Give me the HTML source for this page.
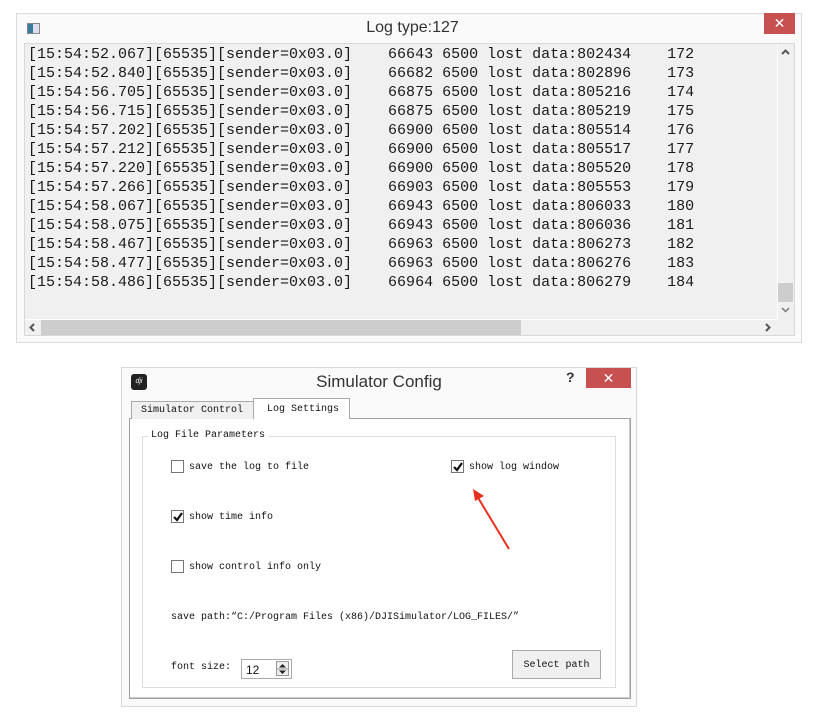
<!DOCTYPE html>
<html><head><meta charset="utf-8">
<style>
*{margin:0;padding:0;box-sizing:border-box}
body{width:825px;height:725px;background:#fff;position:relative;overflow:hidden;font-family:"Liberation Sans",sans-serif}
.a{position:absolute}
.log{font-family:"Liberation Mono",monospace;font-size:15px;color:#1a1a1a;white-space:pre;line-height:19px}
.d{font-family:"Liberation Mono",monospace;font-size:10px;color:#111;white-space:pre}
.cb{position:absolute;width:13px;height:13px;border:1px solid #777;background:#fff}
</style></head><body>

<div class="a" style="left:16px;top:13px;width:786px;height:330px;background:#fafafa;border:1px solid #dcdcdc"></div>
<div class="a" style="left:27px;top:23px;width:13px;height:11px;border:1px solid #888;background:linear-gradient(90deg,#3a7a9a 0 45%,#dde 45%)"></div>
<div class="a" style="left:0;width:825px;top:19px;text-align:center;font-size:16px;color:#333">Log type:127</div>
<div class="a" style="left:764px;top:13px;width:31px;height:21px;background:#c75050;color:#fff;text-align:center;font-size:14px;line-height:21px">✕</div>
<div class="a" style="left:24px;top:43px;width:771px;height:293px;background:#f0f0f0;border:1px solid #d8d8d8"></div>
<div class="a log" style="left:28px;top:45px">[15:54:52.067][65535][sender=0x03.0]    66643 6500 lost data:802434    172
[15:54:52.840][65535][sender=0x03.0]    66682 6500 lost data:802896    173
[15:54:56.705][65535][sender=0x03.0]    66875 6500 lost data:805216    174
[15:54:56.715][65535][sender=0x03.0]    66875 6500 lost data:805219    175
[15:54:57.202][65535][sender=0x03.0]    66900 6500 lost data:805514    176
[15:54:57.212][65535][sender=0x03.0]    66900 6500 lost data:805517    177
[15:54:57.220][65535][sender=0x03.0]    66900 6500 lost data:805520    178
[15:54:57.266][65535][sender=0x03.0]    66903 6500 lost data:805553    179
[15:54:58.067][65535][sender=0x03.0]    66943 6500 lost data:806033    180
[15:54:58.075][65535][sender=0x03.0]    66943 6500 lost data:806036    181
[15:54:58.467][65535][sender=0x03.0]    66963 6500 lost data:806273    182
[15:54:58.477][65535][sender=0x03.0]    66963 6500 lost data:806276    183
[15:54:58.486][65535][sender=0x03.0]    66964 6500 lost data:806279    184</div>
<div class="a" style="left:777px;top:44px;width:17px;height:275px;background:#f0f0f0;border-left:1px solid #fff"></div>
<div class="a" style="left:778px;top:283px;width:15px;height:19px;background:#cdcdcd"></div>
<svg class="a" style="left:780px;top:47px" width="11" height="10"><path d="M2 7L5.5 3.5L9 7" stroke="#555" stroke-width="2" fill="none"/></svg>
<svg class="a" style="left:780px;top:305px" width="11" height="10"><path d="M2 3L5.5 6.5L9 3" stroke="#777" stroke-width="1.5" fill="none"/></svg>
<div class="a" style="left:25px;top:319px;width:752px;height:16px;background:#f0f0f0;border-top:1px solid #fff"></div>
<div class="a" style="left:41px;top:320px;width:480px;height:15px;background:#cdcdcd"></div>
<svg class="a" style="left:27px;top:322px" width="10" height="11"><path d="M7 2L3.5 5.5L7 9" stroke="#555" stroke-width="2" fill="none"/></svg>
<svg class="a" style="left:763px;top:322px" width="10" height="11"><path d="M3 2L6.5 5.5L3 9" stroke="#555" stroke-width="2" fill="none"/></svg>

<div class="a" style="left:121px;top:367px;width:516px;height:340px;background:#fafafa;border:1px solid #d8d8d8"></div>
<div class="a" style="left:131px;top:374px;width:16px;height:16px;background:#222;border-radius:3px;color:#fff;font-size:7px;text-align:center;line-height:16px;font-style:italic">dji</div>
<div class="a" style="left:121px;width:516px;top:372px;text-align:center;font-size:17px;color:#333">Simulator Config</div>
<div class="a" style="left:566px;top:369px;font-size:14px;font-weight:bold;color:#333">?</div>
<div class="a" style="left:586px;top:368px;width:45px;height:20px;background:#c75050;color:#fff;text-align:center;font-size:14px;line-height:20px">✕</div>
<div class="a" style="left:129px;top:418px;width:502px;height:281px;background:#fff;border:1px solid #a0a0a0;box-shadow:inset -1px -1px 0 #ccc"></div>
<div class="a d" style="left:131px;top:401px;width:123px;height:18px;background:#f0f0f0;border:1px solid #aaa;border-bottom:none;padding:3px 0 0 9px">Simulator Control</div>
<div class="a d" style="left:253px;top:398px;width:97px;height:21px;background:#fff;border:1px solid #aaa;border-bottom:none;padding:5px 0 0 13px">Log Settings</div>
<div class="a" style="left:142px;top:436px;width:474px;height:252px;border:1px solid #ddd"></div>
<div class="a d" style="left:148px;top:430px;background:#fff;padding:0 3px">Log File Parameters</div>

<div class="cb" style="left:171px;top:460px"></div>
<div class="a d" style="left:189px;top:462px">save the log to file</div>
<div class="cb" style="left:451px;top:460px"></div>
<svg class="a" style="left:452px;top:461px" width="12" height="12"><path d="M2 6L5 9L10 2" stroke="#111" stroke-width="2.2" fill="none"/></svg>
<div class="a d" style="left:469px;top:462px">show log window</div>

<div class="cb" style="left:171px;top:510px"></div>
<svg class="a" style="left:172px;top:511px" width="12" height="12"><path d="M2 6L5 9L10 2" stroke="#111" stroke-width="2.2" fill="none"/></svg>
<div class="a d" style="left:189px;top:512px">show time info</div>

<div class="cb" style="left:171px;top:560px"></div>
<div class="a d" style="left:189px;top:562px">show control info only</div>

<div class="a d" style="left:171px;top:612px">save path:“C:/Program Files (x86)/DJISimulator/LOG_FILES/”</div>

<div class="a d" style="left:171px;top:662px">font size:</div>
<div class="a" style="left:241px;top:659px;width:51px;height:20px;border:1px solid #aaa;background:#fff;font-size:12px;padding:3px 0 0 4px;color:#111">12</div>
<div class="a" style="left:276px;top:661px;width:13px;height:15px;background:#eee;border:1px solid #999"></div>
<svg class="a" style="left:277px;top:662px" width="11" height="14"><path d="M2 5.5L5.5 2L9 5.5Z M2 8.5L5.5 12L9 8.5Z" fill="#222"/><line x1="0" y1="7" x2="11" y2="7" stroke="#999"/></svg>
<div class="a d" style="left:512px;top:650px;width:89px;height:29px;background:#f0f0f0;border:1px solid #aaa;text-align:center;line-height:30px">Select path</div>

<svg class="a" style="left:0;top:0" width="825" height="725"><line x1="509" y1="549" x2="477" y2="496" stroke="#e8301e" stroke-width="2"/><path d="M473 489L484 496L475 501Z" fill="#e8301e"/></svg>
</body></html>
